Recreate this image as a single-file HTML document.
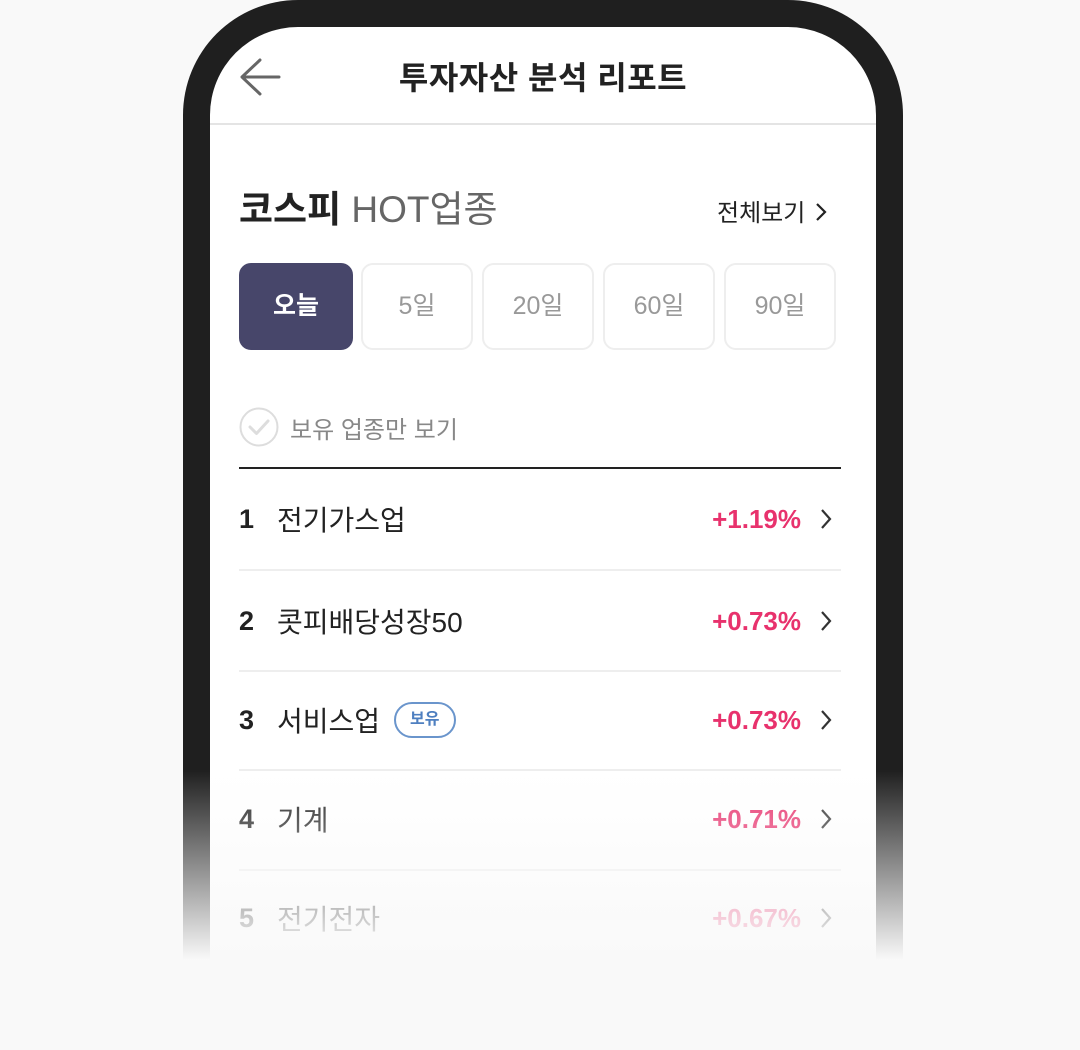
<!DOCTYPE html>
<html><head><meta charset="utf-8">
<style>
*{margin:0;padding:0;box-sizing:border-box}
html,body{width:1080px;height:1050px;overflow:hidden}
body{background:#f9f9f9;position:relative;font-family:"Liberation Sans","Noto Sans CJK KR",sans-serif}
.frame{position:absolute;left:183px;top:0;width:720px;height:1050px;background:#1f1f1f;border-radius:115px 115px 0 0}
.screen{position:absolute;left:210px;top:27px;width:666px;height:1023px;background:#fff;border-radius:88px 88px 0 0;overflow:hidden}
.a{position:absolute}
.title{left:0;width:666px;top:26px;text-align:center;font-size:32px;font-weight:bold;color:#222;letter-spacing:0.5px}
.hdrline{left:0;top:96px;width:666px;height:2px;background:#e4e4e4}
.h1{left:29px;top:152px;font-size:37px;color:#222}
.h1 b{font-weight:bold}
.h1 span{color:#666}
.all{left:507px;top:166px;font-size:24px;color:#222}
.btn{position:absolute;top:236px;height:87px;border:2px solid #eee;border-radius:12px;text-align:center;line-height:83px;font-size:25px;color:#999}
.btn.on{background:#47466a;border-color:#47466a;color:#fff;font-weight:bold}
.chk{left:29px;top:380px}
.chkt{left:80px;top:383px;font-size:24px;color:#888}
.blk{left:29px;top:440px;width:602px;height:2px;background:#222}
.row{position:absolute;left:29px;width:602px;height:44px;display:flex;align-items:center}
.num{width:38px;font-size:27px;font-weight:bold;color:#222}
.nm{font-size:28px;color:#222;display:flex;align-items:center}
.pct{margin-left:auto;margin-right:40px;font-size:26px;font-weight:bold;color:#e8326d}
.arr{position:absolute;right:8px;top:11px}
.sep{position:absolute;left:29px;width:602px;height:2px;background:#eee}
.badge{display:inline-block;margin-left:14px;border:2px solid #6a95cc;border-radius:18px;padding:0 14px;height:36px;line-height:32px;font-size:16px;color:#4e7fc0;font-weight:bold}
.fade{position:absolute;left:0;top:770px;width:1080px;height:190px;background:linear-gradient(to bottom,rgba(249,249,249,0) 0%,#f9f9f9 100%)}
.bottom{position:absolute;left:0;top:960px;width:1080px;height:90px;background:#f9f9f9}
</style></head><body>
<div class="frame"></div>
<div class="screen">
  <svg class="a" style="left:28px;top:30px" width="44" height="40" viewBox="0 0 44 40"><path d="M22 3 L4 20 L22 37 M4 20 L41 20" fill="none" stroke="#666" stroke-width="3" stroke-linecap="round" stroke-linejoin="round"/></svg>
  <div class="a title">투자자산 분석 리포트</div>
  <div class="a hdrline"></div>
  <div class="a h1"><b>코스피</b> <span>HOT업종</span></div>
  <div class="a all">전체보기 <svg width="14" height="20" viewBox="0 0 14 20" style="vertical-align:-1px;margin-left:2px"><path d="M3 2 L11 10 L3 18" fill="none" stroke="#222" stroke-width="2.2"/></svg></div>
  <div class="btn on" style="left:29px;width:114px">오늘</div>
  <div class="btn" style="left:151px;width:112px">5일</div>
  <div class="btn" style="left:272px;width:112px">20일</div>
  <div class="btn" style="left:393px;width:112px">60일</div>
  <div class="btn" style="left:514px;width:112px">90일</div>
  <svg class="a chk" width="40" height="40" viewBox="0 0 40 40"><circle cx="20" cy="20" r="18.5" fill="#fff" stroke="#ddd" stroke-width="2"/><path d="M11 20 L17.5 26.5 L29 14" fill="none" stroke="#ddd" stroke-width="3" stroke-linecap="round" stroke-linejoin="round"/></svg>
  <div class="a chkt">보유 업종만 보기</div>
  <div class="a blk"></div>

  <div class="row" style="top:470px"><span class="num">1</span><span class="nm">전기가스업</span><span class="pct">+1.19%</span><svg class="arr" width="14" height="22" viewBox="0 0 14 22"><path d="M3 2 L11 11 L3 20" fill="none" stroke="#333" stroke-width="2.2"/></svg></div>
  <div class="sep" style="top:542px"></div>
  <div class="row" style="top:572px"><span class="num">2</span><span class="nm">콧피배당성장50</span><span class="pct">+0.73%</span><svg class="arr" width="14" height="22" viewBox="0 0 14 22"><path d="M3 2 L11 11 L3 20" fill="none" stroke="#333" stroke-width="2.2"/></svg></div>
  <div class="sep" style="top:643px"></div>
  <div class="row" style="top:671px"><span class="num">3</span><span class="nm">서비스업<span class="badge">보유</span></span><span class="pct">+0.73%</span><svg class="arr" width="14" height="22" viewBox="0 0 14 22"><path d="M3 2 L11 11 L3 20" fill="none" stroke="#333" stroke-width="2.2"/></svg></div>
  <div class="sep" style="top:742px"></div>
  <div class="row" style="top:770px"><span class="num">4</span><span class="nm">기계</span><span class="pct">+0.71%</span><svg class="arr" width="14" height="22" viewBox="0 0 14 22"><path d="M3 2 L11 11 L3 20" fill="none" stroke="#333" stroke-width="2.2"/></svg></div>
  <div class="sep" style="top:842px"></div>
  <div class="row" style="top:869px"><span class="num">5</span><span class="nm">전기전자</span><span class="pct">+0.67%</span><svg class="arr" width="14" height="22" viewBox="0 0 14 22"><path d="M3 2 L11 11 L3 20" fill="none" stroke="#333" stroke-width="2.2"/></svg></div>
</div>
<div class="fade"></div>
<div class="bottom"></div>
</body></html>
